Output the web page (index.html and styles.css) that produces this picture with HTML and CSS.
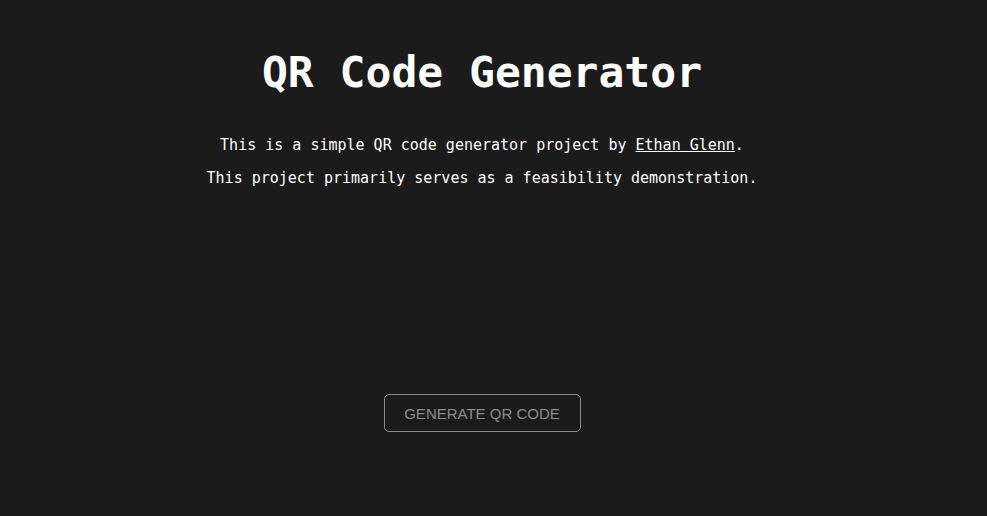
FILE: index.html
```html
<!DOCTYPE html>
<html>
<head>
<meta charset="utf-8">
<link rel="stylesheet" href="styles.css">
</head>
<body>
<main class="page">
  <h1 class="title">QR Code Generator</h1>
  <p class="intro">This is a simple QR code generator project by <a class="author" href="#">Ethan Glenn</a>.</p>
  <p class="intro">This project primarily serves as a feasibility demonstration.</p>
  <div class="spacer"></div>
  <button class="generate">GENERATE QR CODE</button>
</main>
</body>
</html>
```
FILE: styles.css
```css
html, body {
  margin: 0;
  padding: 0;
  background: #1b1b1b;
}
.page {
  width: 964px;
  display: flex;
  flex-direction: column;
  align-items: center;
  font-family: "DejaVu Sans Mono", "Liberation Mono", monospace;
  color: #ffffff;
  text-align: center;
}
.title {
  margin: 44px 0 0 0;
  font-size: 43px;
  font-weight: bold;
  line-height: 56px;
}
.intro {
  margin: 0;
  font-size: 15px;
  line-height: 33px;
}
.intro:first-of-type {
  margin-top: 29px;
}
.author {
  color: #ffffff;
  text-decoration: underline;
}
.spacer {
  height: 199px;
}
.generate {
  width: 197px;
  height: 38px;
  background: transparent;
  border: 1px solid #8a8a8a;
  border-radius: 5px;
  color: #8c8c8c;
  font-family: "Liberation Sans", Arial, sans-serif;
  font-size: 15px;
  padding: 0;
}
```
